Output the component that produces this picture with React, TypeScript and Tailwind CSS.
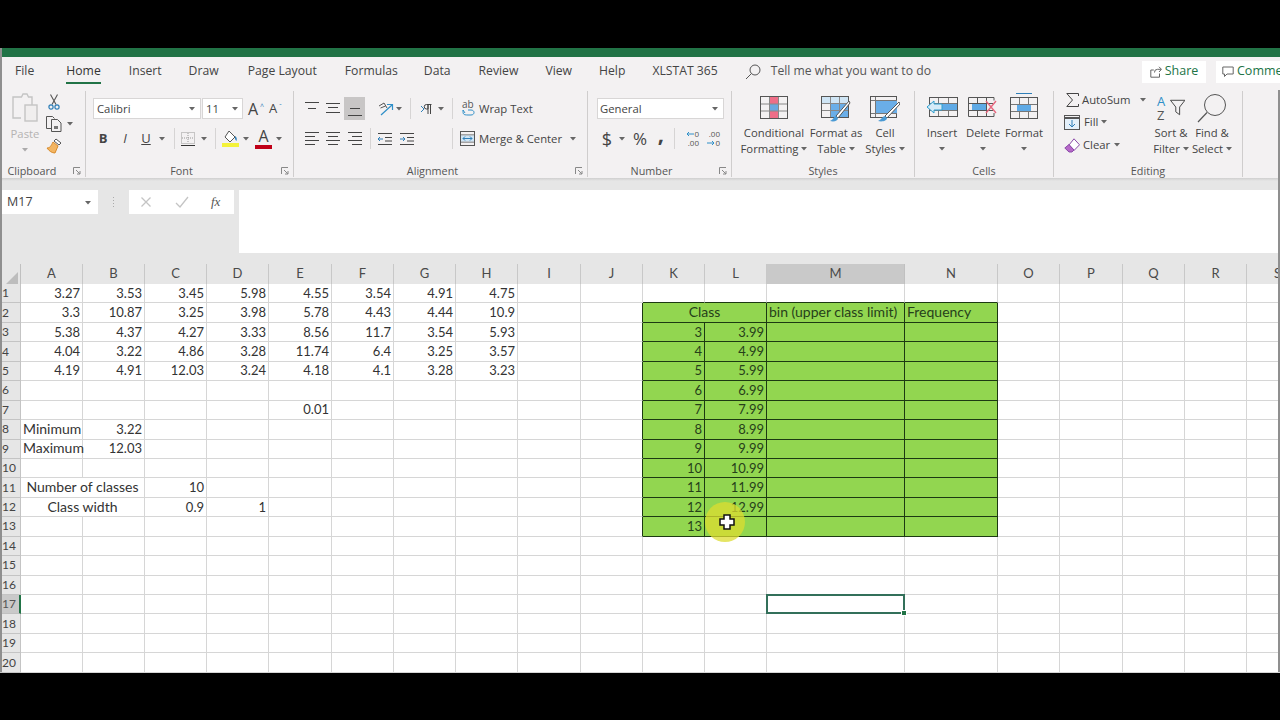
const tabs = [
  { label: "File", cls: "ml-[15px]" },
  { label: "Home", cls: "ml-[32px]", active: true },
  { label: "Insert", cls: "ml-[28px]" },
  { label: "Draw", cls: "ml-[27px]" },
  { label: "Page Layout", cls: "ml-[29px]" },
  { label: "Formulas", cls: "ml-[28px]" },
  { label: "Data", cls: "ml-[26px]" },
  { label: "Review", cls: "ml-[28px]" },
  { label: "View", cls: "ml-[27px]" },
  { label: "Help", cls: "ml-[27px]" },
  { label: "XLSTAT 365", cls: "ml-[27px]" },
];

const columns = ["A", "B", "C", "D", "E", "F", "G", "H", "I", "J", "K", "L", "M", "N", "O", "P", "Q", "R", "S"];
const rowNumbers = Array.from({ length: 20 }, (_, i) => i + 1);

const values: Record<string, string> = {
  A1: "3.27", B1: "3.53", C1: "3.45", D1: "5.98", E1: "4.55", F1: "3.54", G1: "4.91", H1: "4.75",
  A2: "3.3", B2: "10.87", C2: "3.25", D2: "3.98", E2: "5.78", F2: "4.43", G2: "4.44", H2: "10.9",
  A3: "5.38", B3: "4.37", C3: "4.27", D3: "3.33", E3: "8.56", F3: "11.7", G3: "3.54", H3: "5.93",
  A4: "4.04", B4: "3.22", C4: "4.86", D4: "3.28", E4: "11.74", F4: "6.4", G4: "3.25", H4: "3.57",
  A5: "4.19", B5: "4.91", C5: "12.03", D5: "3.24", E5: "4.18", F5: "4.1", G5: "3.28", H5: "3.23",
  E7: "0.01",
  B8: "3.22", B9: "12.03", C11: "10", C12: "0.9", D12: "1",
};
for (let r = 3; r <= 13; r++) {
  values[`K${r}`] = String(r);
  if (r < 13) values[`L${r}`] = `${r}.99`;
}

const leftText: Record<string, string> = {
  A8: "Minimum",
  A9: "Maximum",
  M2: "bin (upper class limit)",
  N2: "Frequency",
};
const mergedText: Record<string, string> = {
  A11: "Number of classes",
  A12: "Class width",
  K2: "Class",
};

const Caret = ({ className = "" }: { className?: string }) => (
  <svg width="6" height="4" viewBox="0 0 6 4" className={`shrink-0 ${className}`}>
    <path d="M0 0h6L3 3.5z" fill="#666" />
  </svg>
);

const Sep = ({ className = "" }: { className?: string }) => (
  <div className={`h-[21px] w-px shrink-0 bg-[#d6d4d4] ${className}`} />
);

const Lines = ({ widths, y }: { widths: number[]; y: number[] }) => (
  <svg width="14" height="14" viewBox="0 0 14 14" className="shrink-0" stroke="#444" strokeWidth="1">
    {widths.map((w, i) => (
      <path key={i} d={`M${(14 - w) / 2} ${y[i]}.5h${w}`} />
    ))}
  </svg>
);

const AlignLines = ({ side }: { side: "l" | "c" | "r" }) => (
  <svg width="14" height="14" viewBox="0 0 14 14" className="shrink-0" stroke="#444" strokeWidth="1">
    {[1, 5, 9, 13].map((y, i) => {
      const w = i % 2 ? 10 : 14;
      const x = side === "l" ? 0 : side === "c" ? (14 - w) / 2 : 14 - w;
      return <path key={y} d={`M${x} ${y - 0.5}h${w}`} />;
    })}
  </svg>
);

const PasteIcon = () => (
  <svg width="28" height="30" viewBox="0 0 28 30" fill="none" stroke="#c4c4c4" strokeWidth="1.4">
    <path d="M7 4h3.5l1.5-3h4l1.5 3H21v8" />
    <path d="M10 25H2V4h5" />
    <rect x="14" y="12" width="12" height="16" fill="#f0eeee" />
  </svg>
);

const ScissorsIcon = () => (
  <svg width="12" height="16" viewBox="0 0 12 16" fill="none">
    <path d="M2.5 0.5 8 10.5M9.5 0.5 4 10.5" stroke="#555" strokeWidth="1.1" />
    <circle cx="3" cy="13" r="2.1" stroke="#2f7fb8" strokeWidth="1.2" />
    <circle cx="9" cy="13" r="2.1" stroke="#2f7fb8" strokeWidth="1.2" />
  </svg>
);

const CopyIcon = () => (
  <svg width="16" height="16" viewBox="0 0 16 16" fill="none" stroke="#555" strokeWidth="1">
    <path d="M5 12.5H.5v-12h6l2 2" />
    <path d="M5.5 3.5h6l3.5 3.5v8.5H5.5z" fill="#f3f1f2" />
    <rect x="8" y="10" width="4" height="3" fill="#777" stroke="none" />
  </svg>
);

const PainterIcon = () => (
  <svg width="16" height="16" viewBox="0 0 16 16" fill="none">
    <path d="M10 1l5 4-2 2-5-4z" fill="#fff" stroke="#555" strokeWidth="1" />
    <path d="M7 4l5 4-3 7c-3 0-6-2-8-5 3 0 4-2 6-6z" fill="#f3b562" stroke="#d98b2b" strokeWidth="1" />
  </svg>
);

const BordersIcon = () => (
  <svg width="14" height="14" viewBox="0 0 14 14" fill="none" className="shrink-0">
    <rect x="0.5" y="0.5" width="13" height="11" stroke="#999" strokeDasharray="1 1" />
    <path d="M7 1v10M1 6h12" stroke="#999" strokeDasharray="1 1" />
    <path d="M0 13.5h14" stroke="#333" />
  </svg>
);

const FillIcon = () => (
  <svg width="18" height="18" viewBox="0 0 18 18" fill="none" className="shrink-0">
    <path d="M7 1l6 6-5 5-5-5z" fill="#fff" stroke="#555" />
    <path d="M13 6c2 1 2 3 1.5 5-1-1-2-2-1.5-5z" fill="#2f7fb8" />
    <rect x="0" y="13" width="17" height="4" fill="#f4f23a" />
  </svg>
);

const FontColorIcon = () => (
  <div className="flex h-[20px] w-[17px] shrink-0 flex-col items-center">
    <span className="text-[16px] leading-[15px] text-[#444]">A</span>
    <div className="mt-[1px] h-[4px] w-full bg-[#c00018]" />
  </div>
);

const OrientationIcon = () => (
  <svg width="17" height="16" viewBox="0 0 17 16" fill="none" className="shrink-0">
    <path d="M1 5l5-3 3 5M2.5 7l5-2" stroke="#555" strokeWidth="1" />
    <path d="M3 14L14 4M9 3.5h5.5V9" stroke="#2f8fc8" strokeWidth="1.2" />
  </svg>
);

const RtlIcon = () => (
  <svg width="12" height="14" viewBox="0 0 12 14" fill="none" className="shrink-0">
    <path d="M1 4l3 3-3 3" stroke="#2f7fb8" />
    <path d="M8 2.5H6.5a2.2 2.2 0 000 4.5H8zM8 2.5V12M10.5 2.5V12M7 2.5h4.5" stroke="#444" />
  </svg>
);

const IndentIcon = ({ flip = false }: { flip?: boolean }) => (
  <svg width="14" height="14" viewBox="0 0 14 14" fill="none" className="shrink-0">
    <path d="M0 1.5h14M7 5.5h7M7 9h7M0 12.5h14" stroke="#444" />
    <path d={flip ? "M0 7h5M3 5l2 2-2 2" : "M5 7H0M2 5L0 7l2 2"} stroke="#2f7fb8" />
  </svg>
);

const WrapIcon = () => (
  <div className="flex h-[18px] w-[14px] shrink-0 flex-col text-[10px] leading-[9px] text-[#555]">
    <span>ab</span>
    <svg width="14" height="8" viewBox="0 0 14 8" fill="none">
      <path d="M1 1c0 4 0 5 5 5h3c4 0 4-5 0-5H6M3 4l-2-3" stroke="#2f8fc8" />
    </svg>
  </div>
);

const MergeIcon = () => (
  <svg width="15" height="15" viewBox="0 0 15 15" fill="none" className="shrink-0">
    <rect x="0.5" y="0.5" width="14" height="14" stroke="#555" />
    <path d="M1 4h13M1 11h13" stroke="#555" />
    <rect x="1" y="4.5" width="13" height="6" fill="#cfe5f5" />
    <path d="M3 7.5h9M5 5.5l-2 2 2 2M10 5.5l2 2-2 2" stroke="#2f7fb8" />
  </svg>
);

const DecimalIcon = ({ more = false }: { more?: boolean }) => (
  <div className="flex w-4 shrink-0 flex-col items-end gap-px text-[8px] leading-[8px] text-[#555]">
    {more ? (
      <>
        <div className="flex items-center">
          <svg width="8" height="6" viewBox="0 0 8 6" fill="none">
            <path d="M8 3H1M3 1L1 3l2 2" stroke="#2f8fc8" />
          </svg>
          <span>0</span>
        </div>
        <span>.00</span>
      </>
    ) : (
      <>
        <span>.00</span>
        <div className="flex items-center">
          <svg width="8" height="6" viewBox="0 0 8 6" fill="none">
            <path d="M0 3h7M5 1l2 2-2 2" stroke="#2f8fc8" />
          </svg>
          <span>0</span>
        </div>
      </>
    )}
  </div>
);

const CondIcon = () => (
  <svg width="28" height="23" viewBox="0 0 28 23" fill="none">
    <rect x="9" y="1" width="9" height="7" fill="#ee6e88" />
    <rect x="9" y="8" width="9" height="7" fill="#6aa8e0" />
    <rect x="9" y="15" width="9" height="7" fill="#ee6e88" />
    <rect x="0.5" y="0.5" width="27" height="22" stroke="#555" />
    <path d="M9.5 1v21M18.5 1v21M1 8h26M1 15h26" stroke="#888" />
  </svg>
);

const TableIcon = () => (
  <svg width="30" height="27" viewBox="0 0 30 27" fill="none">
    <rect x="0.5" y="0.5" width="27" height="21" stroke="#555" />
    <rect x="1" y="1" width="26" height="6" fill="#cfe5f5" />
    <rect x="10" y="7" width="17" height="14" fill="#6aaee8" />
    <path d="M9.5 1v20M18.5 1v20M1 7.5h26M1 14.5h26" stroke="#888" />
    <path d="M28 5L15 20l2 2L29 7z" fill="#fff" stroke="#555" />
    <path d="M15 20c-2 0-2 3-6 5 4 1 8 0 8-3z" fill="#4a9ad4" />
  </svg>
);

const CellStylesIcon = () => (
  <svg width="30" height="27" viewBox="0 0 30 27" fill="none">
    <rect x="0.5" y="0.5" width="26" height="21" stroke="#555" />
    <rect x="5" y="4" width="22" height="13" fill="#6aaee8" />
    <path d="M1 4.5h26M5.5 1v20M1 17.5h26" stroke="#777" />
    <path d="M29 6L15 20l2 2L30 8z" fill="#fff" stroke="#555" />
    <path d="M15 20c-2 0-3 3-7 5 4 1 9 0 9-3z" fill="#4a9ad4" />
  </svg>
);

const InsertCellsIcon = () => (
  <svg width="32" height="22" viewBox="0 0 32 22" fill="none">
    <rect x="3.5" y="1.5" width="28" height="19" stroke="#555" />
    <path d="M12.5 2v18M22.5 2v18M4 7.5h27M4 14.5h27" stroke="#777" />
    <rect x="10" y="8" width="21" height="6" fill="#5faae6" />
    <path d="M1 11l7-6v3h8v6H8v3z" fill="#d5ebf8" stroke="#2f9fd0" />
  </svg>
);

const DeleteCellsIcon = () => (
  <svg width="30" height="22" viewBox="0 0 30 22" fill="none">
    <path d="M26 1.5H.5v19H26M9.5 2v18M18.5 2v18M1 7.5h24M1 14.5h24M26 1.5v3M26 17v3.500" stroke="#555" />
    <rect x="4" y="8" width="14" height="6" fill="#5faae6" />
    <path d="M18 5l10 12M28 5L18 17" stroke="#e8667e" strokeWidth="1.4" />
  </svg>
);

const FormatCellsIcon = () => (
  <svg width="28" height="26" viewBox="0 0 28 26" fill="none" className="-mt-[3px]">
    <path d="M6 .5h16" stroke="#2f7fb8" />
    <rect x="0.500" y="4.500" width="27" height="21" stroke="#555" />
    <path d="M9.500 5v20M18.500 5v20M1 11.500h26M1 18.500h26" stroke="#777" />
    <rect x="7" y="12" width="14" height="6" fill="#5faae6" />
  </svg>
);

const SigmaIcon = () => (
  <svg width="13" height="14" viewBox="0 0 13 14" fill="none" className="shrink-0">
    <path d="M12.500 3V.5H.8L6.500 7 .8 13.500h11.700V11" stroke="#444" />
  </svg>
);

const FillDownIcon = () => (
  <svg width="16" height="15" viewBox="0 0 16 15" fill="none" className="shrink-0">
    <rect x="0.500" y="0.500" width="15" height="14" stroke="#555" />
    <path d="M1 3h14" stroke="#555" strokeWidth="2" />
    <rect x="1" y="4" width="14" height="10" fill="#e4f0fa" />
    <path d="M8 5v7M5 9l3 3 3-3" stroke="#2f7fb8" />
  </svg>
);

const EraserIcon = () => (
  <svg width="16" height="15" viewBox="0 0 16 15" fill="none" className="shrink-0">
    <path d="M10 .8l5.500 6L10 12.500 8 10l-3-3z" fill="#fff" stroke="#8a4aa8" />
    <path d="M5 6.500l5 5.500-2 2H5L.8 10z" fill="#b668c8" stroke="#8a4aa8" />
  </svg>
);

const SortIcon = () => (
  <div className="-mt-[2px] flex h-[28px] w-[28px] items-center">
    <div className="flex w-[12px] flex-col gap-px text-[13px] leading-[13px]">
      <span className="text-[#2f8fc8]">A</span>
      <span className="text-[#555]">Z</span>
    </div>
    <svg width="16" height="18" viewBox="0 0 16 18" fill="none" className="ml-[1px]">
      <path d="M.5 1h15L10 8v8l-4-3V8z" stroke="#444" />
    </svg>
  </div>
);

const FindIcon = () => (
  <svg width="30" height="30" viewBox="0 0 30 30" fill="none" className="-mt-[3px]">
    <circle cx="18" cy="12" r="10.500" stroke="#555" />
    <path d="M10 19.500L1 29" stroke="#555" strokeWidth="1.200" />
  </svg>
);

const Launcher = () => (
  <svg width="8" height="8" viewBox="0 0 8 8" fill="none" className="shrink-0">
    <path d="M.5 7V.5H7" stroke="#888" />
    <path d="M3 3l4 4M4 7h3V4" stroke="#888" />
  </svg>
);

const Group = ({
  label,
  launcher = false,
  className = "",
  labelClass = "",
  children,
}: {
  label: string;
  launcher?: boolean;
  className?: string;
  labelClass?: string;
  children: React.ReactNode;
}) => (
  <div className={`flex h-[86px] shrink-0 flex-col border-r border-[#cfcdcd] ${className}`}>
    <div className="h-[73px]">{children}</div>
    <div className="flex h-[13px] items-center">
      <span className={`flex-1 text-center text-[10.8px] leading-[13px] text-[#555] ${labelClass}`}>{label}</span>
      {launcher && (
        <div className="flex w-[16px] justify-start pl-[4px]">
          <Launcher />
        </div>
      )}
    </div>
  </div>
);

const BigButton = ({
  icon,
  lines,
  caretInline = false,
  className = "",
}: {
  icon: React.ReactNode;
  lines: string[];
  caretInline?: boolean;
  className?: string;
}) => (
  <div className={`flex shrink-0 flex-col items-center pt-[5px] ${className}`}>
    <div className="flex h-[24px] items-start justify-center">{icon}</div>
    <div className="mt-[5px] text-center text-[11.3px] leading-4 whitespace-nowrap text-[#444]">{lines[0]}</div>
    {caretInline ? (
      <div className="flex h-4 items-center gap-[3px] text-[11.3px] leading-4 whitespace-nowrap text-[#444]">
        {lines[1]}
        <Caret />
      </div>
    ) : (
      <div className="flex h-4 items-center justify-center">
        <Caret />
      </div>
    )}
  </div>
);

const Ribbon = () => (
  <div className="flex h-[88px] bg-[#f3f1f2] pt-[1px] text-[#444]">
    <Group label="Clipboard" launcher className="w-[86px]" labelClass="pr-[5px]">
      <div className="flex">
        <div className="ml-[10px] flex w-[30px] flex-col items-center pt-[2px]">
          <PasteIcon />
          <span className="mt-[3px] text-[11.3px] leading-4 text-[#b5b3b3]">Paste</span>
          <Caret className="mt-[6px] opacity-50" />
        </div>
        <div className="ml-[6px] flex flex-col pt-[3px]">
          <div className="ml-[2px]"><ScissorsIcon /></div>
          <div className="mt-[6px] flex items-center">
            <CopyIcon />
            <Caret className="ml-[5px]" />
          </div>
          <div className="mt-[6px]"><PainterIcon /></div>
        </div>
      </div>
    </Group>

    <Group label="Font" launcher className="w-[208px]">
      <div className="flex flex-col pt-[7px]">
        <div className="flex h-[21px] items-center pl-[7px]">
          <div className="flex h-[21px] w-[108px] items-center justify-between border border-[#d8d6d6] bg-white pt-px pr-[5px] pl-[3px] text-[11.3px]">
            Calibri
            <Caret />
          </div>
          <div className="ml-px flex h-[21px] w-[41px] items-center justify-between border border-[#d8d6d6] bg-white pt-px pr-[4px] pl-[3px] text-[11.3px]">
            11
            <Caret />
          </div>
          <span className="ml-[5px] w-[12px] text-[16px] leading-none">A</span>
          <span className="mb-[5px] w-[3px] text-[7px] leading-none text-[#2f7fb8]">^</span>
          <span className="ml-[6px] w-[10px] text-[13px] leading-none">A</span>
          <span className="mb-[5px] text-[7px] leading-none text-[#2f7fb8]">ˇ</span>
        </div>
        <div className="mt-[9px] flex h-[21px] items-center pl-[9px]">
          <span className="w-4 text-center text-[13px] font-bold">B</span>
          <span className="ml-[6px] w-4 text-center text-[13px] italic">I</span>
          <span className="ml-[5px] w-4 text-center text-[13px] underline">U</span>
          <Caret className="ml-[5px]" />
          <Sep className="ml-[9px]" />
          <div className="ml-[6px]"><BordersIcon /></div>
          <Caret className="ml-[6px]" />
          <Sep className="ml-[8px]" />
          <div className="ml-[6px]"><FillIcon /></div>
          <Caret className="ml-[3px]" />
          <div className="ml-[6px]"><FontColorIcon /></div>
          <Caret className="ml-[4px]" />
        </div>
      </div>
    </Group>

    <Group label="Alignment" launcher className="w-[294px]">
      <div className="flex flex-col pt-[7px]">
        <div className="flex h-[21px] items-center pl-[11px]">
          <Lines widths={[14, 8]} y={[0, 6]} />
          <div className="ml-[7px]"><Lines widths={[14, 10, 14]} y={[1, 5, 10]} /></div>
          <div className="ml-[4px] flex h-[23px] w-[21px] shrink-0 items-center justify-center bg-[#c8c6c6]">
            <Lines widths={[10, 14]} y={[6, 13]} />
          </div>
          <div className="ml-[13px]"><OrientationIcon /></div>
          <Caret className="ml-[1px]" />
          <Sep className="ml-[8px]" />
          <div className="ml-[9px]"><RtlIcon /></div>
          <Caret className="ml-[6px]" />
          <Sep className="ml-[8px]" />
          <div className="ml-[9px]"><WrapIcon /></div>
          <span className="ml-[3px] pt-px text-[11.3px] whitespace-nowrap">Wrap Text</span>
        </div>
        <div className="mt-[9px] flex h-[21px] items-center pl-[11px]">
          <AlignLines side="l" />
          <div className="ml-[7px]"><AlignLines side="c" /></div>
          <div className="ml-[8px]"><AlignLines side="r" /></div>
          <Sep className="ml-[8px]" />
          <div className="ml-[7px]"><IndentIcon /></div>
          <div className="ml-[8px]"><IndentIcon flip /></div>
          <Sep className="ml-[38px]" />
          <div className="ml-[7px]"><MergeIcon /></div>
          <span className="ml-[4px] w-[87px] pt-px text-[11.3px] whitespace-nowrap">Merge &amp; Center</span>
          <Caret className="ml-[4px]" />
        </div>
      </div>
    </Group>

    <Group label="Number" launcher className="w-[144px]">
      <div className="flex flex-col pt-[7px]">
        <div className="ml-[9px] flex h-[21px] w-[127px] items-center justify-between border border-[#d8d6d6] bg-white pt-px pr-[5px] pl-[2px] text-[11.3px]">
          General
          <Caret />
        </div>
        <div className="mt-[9px] flex h-[21px] items-center pl-[12px]">
          <span className="w-[14px] text-center text-[18px] leading-none">$</span>
          <Caret className="ml-[5px]" />
          <span className="ml-[6px] w-[18px] text-center text-[17px] leading-none">%</span>
          <span className="ml-[5px] w-[14px] -translate-y-[6px] text-center text-[22px] leading-none font-bold">,</span>
          <Sep className="ml-[6px]" />
          <div className="ml-[8px]"><DecimalIcon more /></div>
          <div className="ml-[5px]"><DecimalIcon /></div>
        </div>
      </div>
    </Group>

    <Group label="Styles" className="w-[183px]">
      <div className="flex pl-[6px]">
        <BigButton className="w-[72px]" icon={<CondIcon />} lines={["Conditional", "Formatting"]} caretInline />
        <BigButton className="w-[52px]" icon={<TableIcon />} lines={["Format as", "Table"]} caretInline />
        <BigButton className="w-[46px]" icon={<CellStylesIcon />} lines={["Cell", "Styles"]} caretInline />
      </div>
    </Group>

    <Group label="Cells" className="w-[139px]">
      <div className="flex pl-[3px]">
        <BigButton className="w-[48px]" icon={<InsertCellsIcon />} lines={["Insert"]} />
        <BigButton className="w-[34px]" icon={<DeleteCellsIcon />} lines={["Delete"]} />
        <BigButton className="w-[48px]" icon={<FormatCellsIcon />} lines={["Format"]} />
      </div>
    </Group>

    <Group label="Editing" className="w-[189px]">
      <div className="flex">
        <div className="-mt-[2px] flex w-[95px] shrink-0 flex-col pl-[10px] text-[11.3px]">
          <div className="flex h-[22px] items-center pl-[2px]">
            <SigmaIcon />
            <span className="ml-[3px] w-[58px]">AutoSum</span>
            <Caret />
          </div>
          <div className="flex h-[22px] items-center">
            <FillDownIcon />
            <span className="ml-[4px]">Fill</span>
            <Caret className="ml-[3px]" />
          </div>
          <div className="mt-px flex h-[22px] items-center">
            <EraserIcon />
            <span className="ml-[3px]">Clear</span>
            <Caret className="ml-[4px]" />
          </div>
        </div>
        <BigButton className="w-[44px]" icon={<SortIcon />} lines={["Sort &", "Filter"]} caretInline />
        <BigButton className="w-[38px]" icon={<FindIcon />} lines={["Find &", "Select"]} caretInline />
      </div>
    </Group>
  </div>
);

const FormulaBar = () => (
  <div className="flex h-[86px] flex-col bg-[#e6e6e6]">
    <div className="h-[3px] bg-gradient-to-b from-[#cfcfcf] to-[#e6e6e6]" />
    <div className="flex pt-[9px] pl-[2px] text-[12.5px] text-[#444]">
      <div className="flex h-[24px] w-[96px] items-center justify-between bg-white pt-px pr-[7px] pl-[5px]">
        M17
        <Caret />
      </div>
      <div className="mx-[15px] flex h-[24px] flex-col items-center justify-center gap-[2px]">
        <div className="size-[1px] bg-[#aaa]" />
        <div className="size-[1px] bg-[#aaa]" />
        <div className="size-[1px] bg-[#aaa]" />
        <div className="size-[1px] bg-[#aaa]" />
      </div>
      <div className="flex h-[24px] w-[105px] items-center bg-white pl-[11px]">
        <svg width="12" height="12" viewBox="0 0 12 12" fill="none">
          <path d="M1.500 1.500l9 9M10.500 1.500l-9 9" stroke="#c4c4c4" strokeWidth="1.300" />
        </svg>
        <svg width="14" height="12" viewBox="0 0 14 12" fill="none" className="ml-[23px]">
          <path d="M1 7l4 4 8-10" stroke="#c4c4c4" strokeWidth="1.300" />
        </svg>
        <span className="ml-[22px] font-['Liberation_Serif',serif] text-[13px] text-[#555] italic">fx</span>
      </div>
      <div className="ml-[5px] h-[63px] flex-1 bg-white" />
    </div>
  </div>
);

const headerCols =
  "grid-cols-[21px_62px_62px_62px_62px_63px_62px_62px_62px_63px_62px_62px_62px_138px_93px_62px_63px_62px_62px_62px]";

const ColumnHeader = () => (
  <div className={`grid h-[20px] ${headerCols} bg-[#e6e6e6] text-[#4a4a4a]`}>
    <div className="flex items-end justify-end border-r border-b border-[#c0c0c0] pr-[2px] pb-[2px]">
      <svg width="13" height="13" viewBox="0 0 13 13">
        <path d="M13 0v13H0z" fill="#bdbdbd" />
      </svg>
    </div>
    {columns.map((c) => (
      <div
        key={c}
        className={
          c === "M"
            ? "flex items-center justify-center border-r border-b-2 border-r-[#c0c0c0] border-b-[#217346] bg-[#c9c9c9] pb-[2px]"
            : "flex items-center justify-center border-r border-b border-[#c8c8c8] pb-[3px]"
        }
      >
        {c}
      </div>
    ))}
  </div>
);

const Cell = ({ col, row }: { col: string; row: number }) => {
  const id = `${col}${row}`;
  const inTable = row >= 2 && row <= 13 && ["K", "L", "M", "N"].includes(col);
  const blackBottom = inTable || (row === 1 && ["K", "L", "M", "N"].includes(col));
  const blackRight = inTable || (col === "J" && row >= 2 && row <= 13);
  const merged = mergedText[id];
  const left = leftText[id];
  const value = values[id];

  return (
    <div
      className={`relative flex items-center overflow-visible border-r border-b whitespace-nowrap ${
        merged
          ? "col-span-2 justify-center pb-px text-[14px]"
          : left
            ? "justify-start pb-px pl-[2px] text-[14px]"
            : "justify-end pr-[2px] text-[13px]"
      } ${blackRight ? "border-r-[#1c3a12]" : "border-r-[#d6d6d6]"} ${
        blackBottom ? "border-b-[#1c3a12]" : "border-b-[#d6d6d6]"
      } ${inTable ? "bg-[#92d650] text-[#26401a]" : "text-[#333]"}`}
    >
      {merged ?? left ?? value}
      {id === "M17" && (
        <div className="absolute -top-px -right-px -bottom-px -left-px z-10 border-2 border-[#33705a]">
          <div className="absolute -right-[4px] -bottom-[4px] size-[6px] border border-white bg-[#217346]" />
        </div>
      )}
    </div>
  );
};

const Sheet = () => (
  <div className={`relative grid h-[388px] auto-rows-[19.45px] ${headerCols} bg-white text-[13px] leading-none`}>
    {rowNumbers.map((row) => (
      <div key={row} className="contents">
        <div
          className={
            row === 17
              ? "flex items-center border-r-2 border-b border-r-[#217346] border-b-[#c0c0c0] bg-[#c9c9c9] pl-[2px] text-[12px] text-[#555]"
              : "flex items-center border-r border-b border-[#c4c4c4] bg-[#e6e6e6] pl-[2px] text-[12px] text-[#444]"
          }
        >
          {row}
        </div>
        {columns
          .filter((c) => !((row === 2 && c === "L") || ((row === 11 || row === 12) && c === "B")))
          .map((c) => (
            <Cell key={c} col={c} row={row} />
          ))}
      </div>
    ))}
    {/* highlighted mouse pointer */}
    <div className="absolute top-[218px] left-[705px] z-20 flex size-[40px] items-center justify-center rounded-full bg-[#dcdc30]/75">
      <svg width="16" height="16" viewBox="0 0 16 16" className="ml-[3px]">
        <path d="M5 1h6v4h4v6h-4v4H5v-4H1V5h4z" fill="#fff" stroke="#111" strokeWidth="1.500" />
      </svg>
    </div>
  </div>
);

export default function App() {
  return (
    <div className="relative flex h-[720px] w-[1280px] flex-col overflow-hidden bg-black font-['Open_Sans','Noto_Sans',sans-serif]">
      <div className="h-[48px] shrink-0 bg-black" />
      <div className="h-[9px] shrink-0 bg-[#217346]" />

      <div className="flex h-[33px] shrink-0 items-center bg-[#f3f1f2] pb-[4px] text-[12.2px] text-[#444]">
        {tabs.map((t) => (
          <span
            key={t.label}
            className={`${t.cls} whitespace-nowrap ${t.active ? "border-b-2 border-[#217346] pt-[3px] pb-[1px] text-[#333]" : ""}`}
          >
            {t.label}
          </span>
        ))}
        <svg width="16" height="16" viewBox="0 0 16 16" fill="none" className="ml-[27px]">
          <circle cx="10" cy="6" r="5" stroke="#555" />
          <path d="M6.500 9.500L1 15" stroke="#555" />
        </svg>
        <span className="ml-[10px] whitespace-nowrap text-[#555]">Tell me what you want to do</span>
        <div className="ml-auto flex items-center text-[12.5px]">
          <div className="flex h-[22px] w-[64px] items-center justify-center gap-[3px] bg-white text-[#217346]">
            <svg width="12" height="12" viewBox="0 0 12 12" fill="none">
              <path d="M9 .8l2.500 2.500L9 6M11 3.300H7.500A3 3 0 004.500 6.500M9.500 7.500v3.700H.8V4h3" stroke="#666" />
            </svg>
            Share
          </div>
          <div className="ml-[10px] flex h-[22px] w-[64px] items-center gap-[3px] overflow-hidden bg-white pl-[6px] text-[#217346]">
            <svg width="12" height="12" viewBox="0 0 12 12" fill="none" className="shrink-0">
              <path d="M.8 1h10.400v7H5L2.500 10.500V8H.8z" stroke="#666" />
            </svg>
            Comments
          </div>
        </div>
      </div>

      <Ribbon />
      <FormulaBar />

      <div className="font-['Lato','Liberation_Sans',sans-serif] text-[13px]">
        <ColumnHeader />
        <Sheet />
      </div>

      <div className="absolute top-[48px] left-0 h-[624px] w-[2px] bg-[#8f8f8f]" />
      <div className="absolute top-[90px] right-0 h-[582px] w-[2px] bg-[#8f8f8f]" />
    </div>
  );
}
